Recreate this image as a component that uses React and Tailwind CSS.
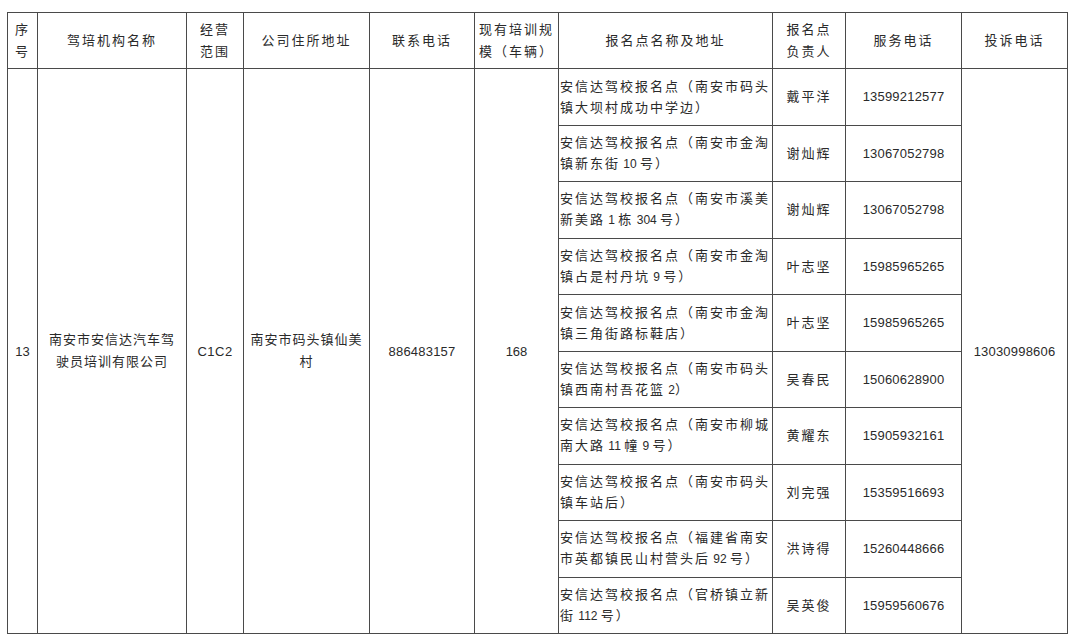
import React from "react";

const rows = [
  ["安信达驾校报名点（南安市码头", "镇大坝村成功中学边）", "戴平洋", "13599212577"],
  ["安信达驾校报名点（南安市金淘", "镇新东街 10 号）", "谢灿辉", "13067052798"],
  ["安信达驾校报名点（南安市溪美", "新美路 1 栋 304 号）", "谢灿辉", "13067052798"],
  ["安信达驾校报名点（南安市金淘", "镇占是村丹坑 9 号）", "叶志坚", "15985965265"],
  ["安信达驾校报名点（南安市金淘", "镇三角街路标鞋店）", "叶志坚", "15985965265"],
  ["安信达驾校报名点（南安市码头", "镇西南村吾花篮 2）", "吴春民", "15060628900"],
  ["安信达驾校报名点（南安市柳城", "南大路 11 幢 9 号）", "黄耀东", "15905932161"],
  ["安信达驾校报名点（南安市码头", "镇车站后）", "刘完强", "15359516693"],
  ["安信达驾校报名点（福建省南安", "市英都镇民山村营头后 92 号）", "洪诗得", "15260448666"],
  ["安信达驾校报名点（官桥镇立新", "街 112 号）", "吴英俊", "15959560676"],
];

// digits and latin letters are narrower than the spaced-out CJK text
const Mixed = ({ text }) =>
  text.split(/([0-9A-Za-z ]+)/).map((part, i) =>
    /^[0-9A-Za-z ]+$/.test(part) ? (
      <span key={i} className="tracking-normal text-[12px]">
        {part}
      </span>
    ) : (
      <span key={i}>{part}</span>
    )
  );

const cell = "border border-[#4a4a4a] p-0 align-middle";
const num = "tracking-[0.2px] text-[13px]";

export default function App() {
  return (
    <div
      className="w-[1080px] h-[642px] bg-white pt-[12px] pl-[7px] text-[#2a2a2a] text-[13px] leading-[21px] tracking-[2px]"
      style={{ fontFamily: '"Liberation Sans", "Noto Sans CJK SC", sans-serif' }}
    >
      <table className="border-collapse table-fixed w-[1060px]">
        <colgroup>
          <col className="w-[30px]" />
          <col className="w-[149px]" />
          <col className="w-[57px]" />
          <col className="w-[126px]" />
          <col className="w-[105px]" />
          <col className="w-[84px]" />
          <col className="w-[214px]" />
          <col className="w-[73px]" />
          <col className="w-[116px]" />
          <col className="w-[106px]" />
        </colgroup>
        <thead>
          <tr className="h-[56px] text-center">
            <th className={`${cell} font-normal leading-[22px]`}>
              序<br />号
            </th>
            <th className={`${cell} font-normal`}>驾培机构名称</th>
            <th className={`${cell} font-normal leading-[22px]`}>
              经营<br />范围
            </th>
            <th className={`${cell} font-normal`}>公司住所地址</th>
            <th className={`${cell} font-normal`}>联系电话</th>
            <th className={`${cell} font-normal leading-[22px]`}>
              现有培训规<br />模（车辆）
            </th>
            <th className={`${cell} font-normal`}>报名点名称及地址</th>
            <th className={`${cell} font-normal leading-[22px]`}>
              报名点<br />负责人
            </th>
            <th className={`${cell} font-normal`}>服务电话</th>
            <th className={`${cell} font-normal`}>投诉电话</th>
          </tr>
        </thead>
        <tbody>
          {rows.map((r, i) => (
            <tr key={i} className="h-[56.5px]">
              {i === 0 && (
                <>
                  <td rowSpan={10} className={`${cell} text-center tracking-normal`}>
                    13
                  </td>
                  <td rowSpan={10} className={`${cell} text-center tracking-[1px] leading-[22px]`}>
                    南安市安信达汽车驾<br />驶员培训有限公司
                  </td>
                  <td rowSpan={10} className={`${cell} text-center tracking-[0.5px]`}>
                    C1C2
                  </td>
                  <td rowSpan={10} className={`${cell} text-center tracking-[1px] leading-[22px]`}>
                    南安市码头镇仙美<br />村
                  </td>
                  <td rowSpan={10} className={`${cell} text-center ${num}`}>
                    886483157
                  </td>
                  <td rowSpan={10} className={`${cell} text-center tracking-normal`}>
                    168
                  </td>
                </>
              )}
              <td className={`${cell} pl-px whitespace-nowrap`}>
                {r[0]}
                <br />
                <Mixed text={r[1]} />
              </td>
              <td className={`${cell} text-center`}>{r[2]}</td>
              <td className={`${cell} text-center ${num}`}>{r[3]}</td>
              {i === 0 && (
                <td rowSpan={10} className={`${cell} text-center ${num}`}>
                  13030998606
                </td>
              )}
            </tr>
          ))}
        </tbody>
      </table>
    </div>
  );
}
